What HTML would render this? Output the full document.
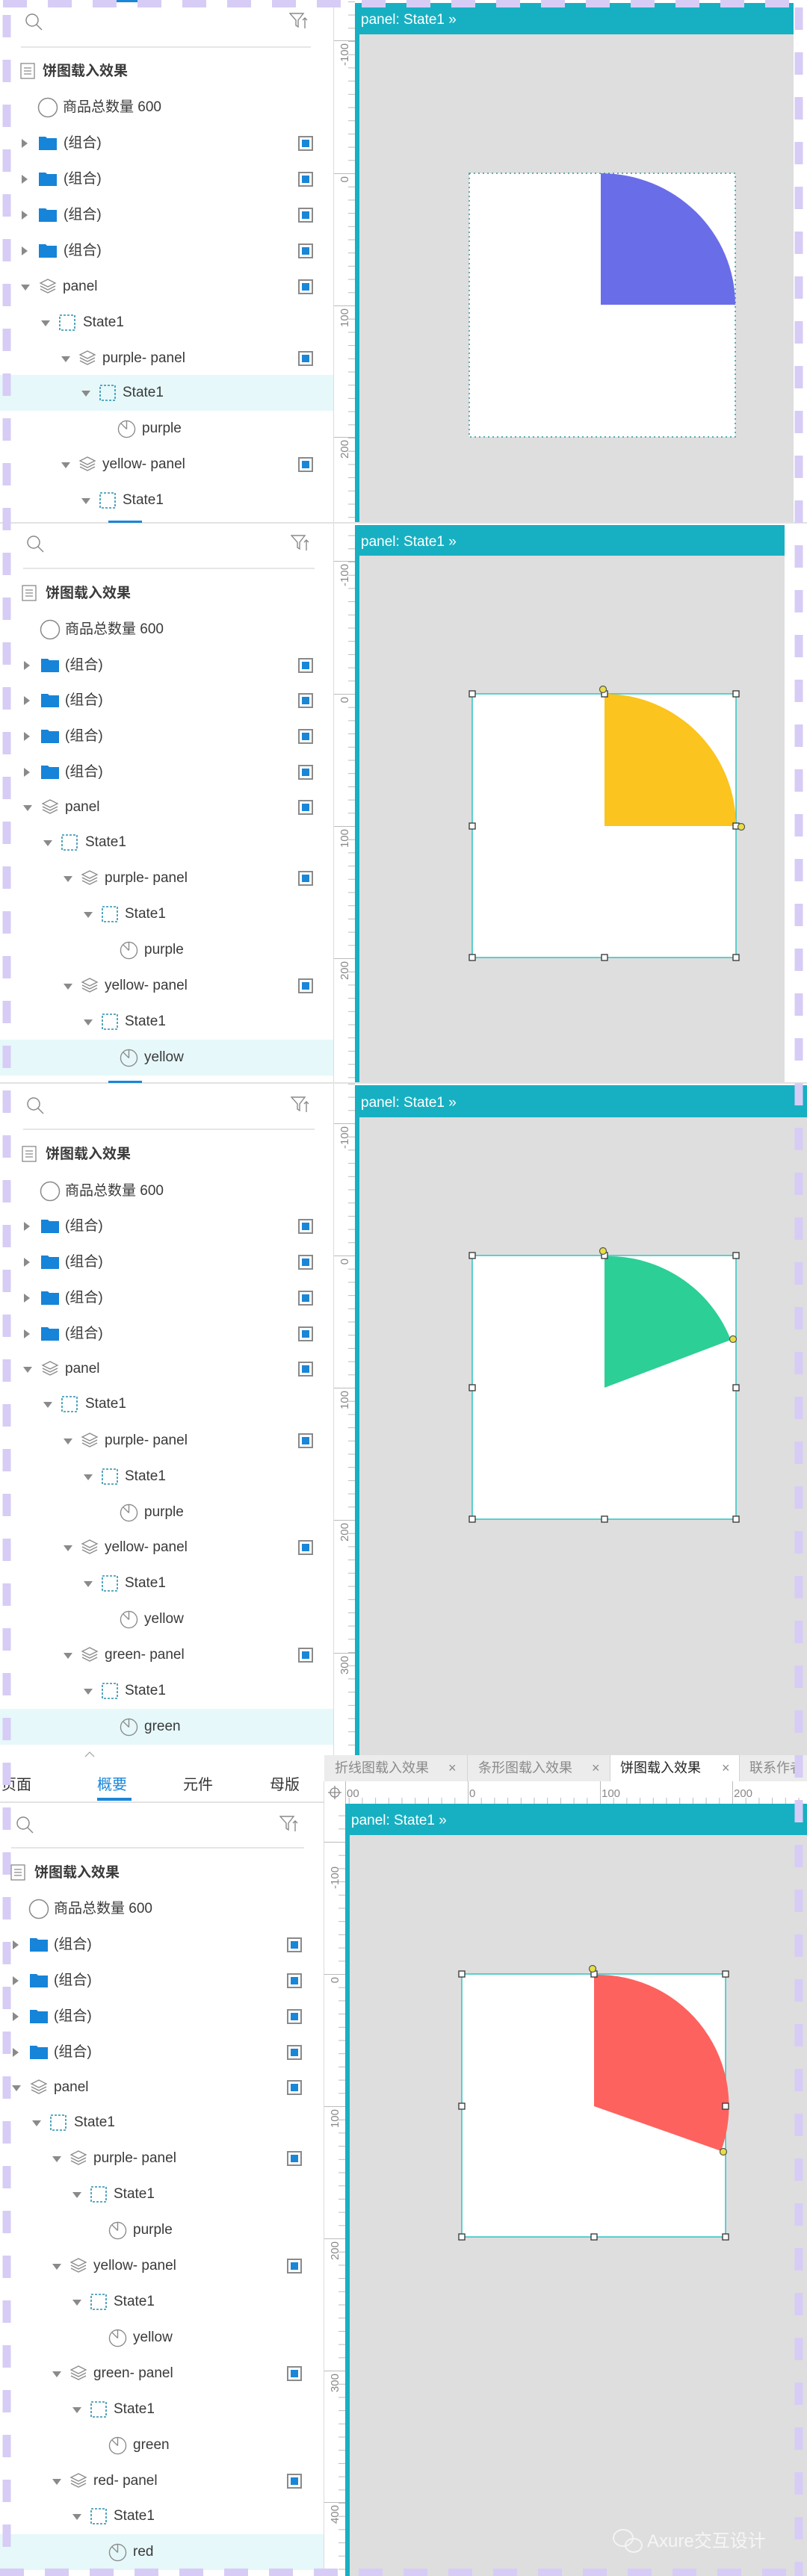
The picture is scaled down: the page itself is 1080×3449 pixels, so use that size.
<!DOCTYPE html>
<html><head><meta charset="utf-8">
<style>
*{margin:0;padding:0;box-sizing:border-box}
body{width:1080px;height:3449px;position:relative;overflow:hidden;background:#fff;font-family:"Liberation Sans","Noto Sans CJK SC",sans-serif;color:#3a3a3a}
#bg{position:absolute;left:0;top:0;z-index:0}
#ov{position:absolute;left:0;top:0;z-index:5;pointer-events:none}
.sec{position:absolute;left:0;overflow:hidden;z-index:2}
.r{position:absolute;left:0;width:460px;height:48px}
.r>*{position:absolute}
.hl{background:#e6f8fa}
.t{top:0;line-height:48px;font-size:19px;white-space:nowrap}
.ad{top:21px;width:0;height:0;border-left:6px solid transparent;border-right:6px solid transparent;border-top:8px solid #8a8a8a}
.ar{top:18px;width:0;height:0;border-top:6px solid transparent;border-bottom:6px solid transparent;border-left:8px solid #8a8a8a}
.i{top:12px}
.c{left:399px;top:14px;width:20px;height:20px;border:2px solid #8a8a8a;background:#fff}
.c::after{content:"";position:absolute;left:3px;top:3px;width:10px;height:10px;background:#1a86d8}
.srch{position:absolute}
.dv{position:absolute;height:2px;background:#e6e6e6}
.tb{position:absolute;font-size:18px;line-height:36px;color:#8a8a8a;white-space:nowrap}
</style></head><body>
<svg width="0" height="0" style="position:absolute">
<defs>
<symbol id="fo" viewBox="0 0 24 20"><path d="M0 1h9l2 2h13v16H0z" fill="#1684d8"/></symbol>
<symbol id="ly" viewBox="0 0 24 24" fill="none" stroke="#8a8a8a" stroke-width="1.3"><path d="M12 2L22 7 12 12 2 7z"/><path d="M2 11l10 5 10-5"/><path d="M2 15l10 5 10-5"/></symbol>
<symbol id="st" viewBox="0 0 24 24"><rect x="2" y="2" width="20" height="20" fill="none" stroke="#2a8fae" stroke-width="1.6" stroke-dasharray="3 2"/></symbol>
<symbol id="pi" viewBox="0 0 26 26" fill="none" stroke="#8a8a8a" stroke-width="1.4"><circle cx="13" cy="13" r="11.5"/><path d="M13 13V1.5M13 13L5 5"/></symbol>
<symbol id="ci" viewBox="0 0 28 28"><circle cx="14" cy="14" r="12.5" fill="none" stroke="#8a8a8a" stroke-width="1.5"/></symbol>
<symbol id="dc" viewBox="0 0 20 22" fill="none" stroke="#8a8a8a" stroke-width="1.3"><rect x="1" y="1" width="18" height="20"/><path d="M5 7h10M5 11h10M5 15h10"/></symbol>
<symbol id="sr" viewBox="0 0 26 26" fill="none" stroke="#8a8a8a" stroke-width="1.5"><circle cx="11" cy="11" r="8"/><path d="M17 17l7 7"/></symbol>
<symbol id="fl" viewBox="0 0 26 24" fill="none" stroke="#8a8a8a" stroke-width="1.4"><path d="M1 2h18l-7 9v9l-3-2v-7z"/><path d="M21 8v14M18 11l3-3 3 3"/></symbol>
<pattern id="p1" x="447" y="232" width="28" height="17.7" patternUnits="userSpaceOnUse"><path d="M19 0.5h9" stroke="#bbb"/></pattern>
<pattern id="p2" x="447" y="929" width="28" height="17.7" patternUnits="userSpaceOnUse"><path d="M19 0.5h9" stroke="#bbb"/></pattern>
<pattern id="p3" x="447" y="1681" width="28" height="17.7" patternUnits="userSpaceOnUse"><path d="M19 0.5h9" stroke="#bbb"/></pattern>
<pattern id="p4" x="434" y="2643" width="28" height="17.7" patternUnits="userSpaceOnUse"><path d="M19 0.5h9" stroke="#bbb"/></pattern>
<pattern id="ph" x="449" y="2385" width="17.7" height="30" patternUnits="userSpaceOnUse"><path d="M0.5 22v8" stroke="#bbb"/></pattern>
</defs></svg>

<svg id="bg" width="1080" height="3449" viewBox="0 0 1080 3449" font-family="Liberation Sans, sans-serif">
<!-- sidebar borders -->
<rect x="446" y="0" width="1" height="2350" fill="#dcdcdc"/>
<rect x="433" y="2385" width="1" height="1064" fill="#dcdcdc"/>
<!-- Section 1 -->
<rect x="447" y="0" width="28" height="700" fill="url(#p1)"/>
<g stroke="#bbb"><path d="M447 54.5h28M447 232.5h28M447 409.5h28M447 585.5h28"/></g>
<g fill="#888" font-size="15">
<text transform="translate(466 58) rotate(-90)" text-anchor="end">-100</text>
<text transform="translate(466 236) rotate(-90)" text-anchor="end">0</text>
<text transform="translate(466 413) rotate(-90)" text-anchor="end">100</text>
<text transform="translate(466 589) rotate(-90)" text-anchor="end">200</text>
</g>
<rect x="475" y="4" width="587" height="42" fill="#17b0c2"/>
<rect x="475" y="4" width="6" height="696" fill="#17b0c2"/>
<rect x="481" y="46" width="581" height="654" fill="#dedede"/>
<text x="483" y="32" fill="#fff" font-size="19">panel: State1  »</text>
<rect x="628" y="232" width="356" height="353" fill="#fff" stroke="#2a9a9a" stroke-width="1.5" stroke-dasharray="2 4"/>
<path d="M804 408V232A180 176 0 0 1 984 408Z" fill="#6a6de8"/>
<rect x="0" y="699" width="1080" height="2" fill="#e2e2e2"/>
<rect x="145" y="0" width="45" height="3" fill="#1a86d8"/>
<rect x="145" y="697" width="45" height="3" fill="#1a86d8"/>

<!-- Section 2 -->
<rect x="447" y="701" width="28" height="749" fill="url(#p2)"/>
<g stroke="#bbb"><path d="M447 751.5h28M447 929.5h28M447 1106.5h28M447 1283.5h28"/></g>
<g fill="#888" font-size="15">
<text transform="translate(466 755) rotate(-90)" text-anchor="end">-100</text>
<text transform="translate(466 933) rotate(-90)" text-anchor="end">0</text>
<text transform="translate(466 1110) rotate(-90)" text-anchor="end">100</text>
<text transform="translate(466 1287) rotate(-90)" text-anchor="end">200</text>
</g>
<rect x="475" y="703" width="575" height="41" fill="#17b0c2"/>
<rect x="475" y="703" width="6" height="747" fill="#17b0c2"/>
<rect x="481" y="744" width="569" height="706" fill="#dedede"/>
<text x="483" y="731" fill="#fff" font-size="19">panel: State1  »</text>
<rect x="632" y="929" width="353" height="353" fill="#fff" stroke="#2ec4c4" stroke-width="1.5"/>
<path d="M809 1106V929A176 177 0 0 1 985 1106Z" fill="#fbc41e"/>
<g fill="#fff" stroke="#333" stroke-width="1.3">
<rect x="628" y="925" width="8" height="8"/><rect x="805" y="925" width="8" height="8"/><rect x="981" y="925" width="8" height="8"/>
<rect x="628" y="1102" width="8" height="8"/><rect x="981" y="1102" width="8" height="8"/>
<rect x="628" y="1278" width="8" height="8"/><rect x="805" y="1278" width="8" height="8"/><rect x="981" y="1278" width="8" height="8"/>
</g>
<g fill="#e7df44" stroke="#555" stroke-width="1.2"><circle cx="807" cy="923" r="4.5"/><circle cx="992" cy="1107" r="4.5"/></g>
<rect x="0" y="1449" width="1080" height="2" fill="#e2e2e2"/>
<rect x="145" y="1447" width="45" height="3" fill="#1a86d8"/>

<!-- Section 3 -->
<rect x="447" y="1451" width="28" height="899" fill="url(#p3)"/>
<g stroke="#bbb"><path d="M447 1504.5h28M447 1681.5h28M447 1858.5h28M447 2035.5h28M447 2213.5h28"/></g>
<g fill="#888" font-size="15">
<text transform="translate(466 1508) rotate(-90)" text-anchor="end">-100</text>
<text transform="translate(466 1685) rotate(-90)" text-anchor="end">0</text>
<text transform="translate(466 1862) rotate(-90)" text-anchor="end">100</text>
<text transform="translate(466 2039) rotate(-90)" text-anchor="end">200</text>
<text transform="translate(466 2217) rotate(-90)" text-anchor="end">300</text>
</g>
<rect x="475" y="1453" width="605" height="43" fill="#17b0c2"/>
<rect x="475" y="1453" width="6" height="897" fill="#17b0c2"/>
<rect x="481" y="1496" width="599" height="854" fill="#dedede"/>
<text x="483" y="1482" fill="#fff" font-size="19">panel: State1  »</text>
<rect x="632" y="1681" width="353" height="353" fill="#fff" stroke="#2ec4c4" stroke-width="1.5"/>
<path d="M809 1858V1682A176 176 0 0 1 978 1794Z" fill="#2ccf95"/>
<g fill="#fff" stroke="#333" stroke-width="1.3">
<rect x="628" y="1677" width="8" height="8"/><rect x="805" y="1677" width="8" height="8"/><rect x="981" y="1677" width="8" height="8"/>
<rect x="628" y="1854" width="8" height="8"/><rect x="981" y="1854" width="8" height="8"/>
<rect x="628" y="2030" width="8" height="8"/><rect x="805" y="2030" width="8" height="8"/><rect x="981" y="2030" width="8" height="8"/>
</g>
<g fill="#e7df44" stroke="#555" stroke-width="1.2"><circle cx="807" cy="1675" r="4.5"/><circle cx="981" cy="1793" r="4.5"/></g>

<!-- Section 4 tabs + rulers -->
<rect x="434" y="2350" width="646" height="35" fill="#ececec"/>
<rect x="817" y="2350" width="172" height="35" fill="#fff"/>
<path d="M625.5 2350v35M816.5 2350v35M989.5 2350v35" stroke="#d4d4d4"/>
<rect x="434" y="2385" width="646" height="30" fill="#fff"/>
<rect x="462" y="2385" width="618" height="30" fill="url(#ph)"/>
<g stroke="#bbb"><path d="M626.5 2385v30M803.5 2385v30M980.5 2385v30M462.5 2385v30"/></g>
<g fill="#888" font-size="15"><text x="464" y="2406">00</text><text x="628" y="2406">0</text><text x="805" y="2406">100</text><text x="982" y="2406">200</text></g>
<g fill="none" stroke="#888" stroke-width="1.3"><circle cx="448" cy="2400" r="6"/><path d="M448 2391v18M439 2400h18"/></g>
<rect x="434" y="2415" width="28" height="1034" fill="url(#p4)"/>
<g stroke="#bbb"><path d="M434 2466.5h28M434 2643.5h28M434 2820.5h28M434 2997.5h28M434 3174.5h28M434 3350.5h28"/></g>
<g fill="#888" font-size="15">
<text transform="translate(453 2499) rotate(-90)" text-anchor="end">-100</text>
<text transform="translate(453 2647) rotate(-90)" text-anchor="end">0</text>
<text transform="translate(453 2824) rotate(-90)" text-anchor="end">100</text>
<text transform="translate(453 3001) rotate(-90)" text-anchor="end">200</text>
<text transform="translate(453 3178) rotate(-90)" text-anchor="end">300</text>
<text transform="translate(453 3354) rotate(-90)" text-anchor="end">400</text>
</g>
<rect x="462" y="2415" width="618" height="42" fill="#17b0c2"/>
<rect x="462" y="2415" width="6" height="1034" fill="#17b0c2"/>
<rect x="468" y="2457" width="612" height="992" fill="#dedede"/>
<text x="470" y="2443" fill="#fff" font-size="19">panel: State1  »</text>
<rect x="618" y="2643" width="353" height="352" fill="#fff" stroke="#2ec4c4" stroke-width="1.5"/>
<path d="M795 2820V2644A176 176 0 0 1 965 2880Z" fill="#fd625e"/>
<g fill="#fff" stroke="#333" stroke-width="1.3">
<rect x="614" y="2639" width="8" height="8"/><rect x="791" y="2639" width="8" height="8"/><rect x="967" y="2639" width="8" height="8"/>
<rect x="614" y="2816" width="8" height="8"/><rect x="967" y="2816" width="8" height="8"/>
<rect x="614" y="2991" width="8" height="8"/><rect x="791" y="2991" width="8" height="8"/><rect x="967" y="2991" width="8" height="8"/>
</g>
<g fill="#e7df44" stroke="#555" stroke-width="1.2"><circle cx="793" cy="2636" r="4.5"/><circle cx="968" cy="2881" r="4.5"/></g>
<!-- watermark -->
<g fill="none" stroke="#f4f4f4" stroke-width="2"><ellipse cx="834" cy="3398" rx="13" ry="11"/><ellipse cx="848" cy="3408" rx="11" ry="9"/></g>
<text x="866" y="3410" fill="#f6f6f6" font-size="24">Axure交互设计</text>
<!-- bottom tabs area left -->
<rect x="0" y="2412" width="433" height="2" fill="#e2e2e2"/>
<rect x="130" y="2407" width="46" height="4" fill="#1a86d8"/>
<path d="M114 2352l6-6 6 6" fill="none" stroke="#aaa" stroke-width="1.3"/>
</svg>

<!-- tab labels -->
<div class="tb" style="left:448px;top:2349px">折线图载入效果</div><div class="tb" style="left:600px;top:2349px">×</div>
<div class="tb" style="left:640px;top:2349px">条形图载入效果</div><div class="tb" style="left:792px;top:2349px">×</div>
<div class="tb" style="left:830px;top:2349px;color:#222">饼图载入效果</div><div class="tb" style="left:966px;top:2349px">×</div>
<div class="tb" style="left:1003px;top:2349px">联系作者</div>
<div class="tb" style="left:2px;top:2372px;font-size:20px;color:#333;z-index:3">页面</div>
<div class="tb" style="left:130px;top:2372px;font-size:20px;color:#1a86d8;z-index:3">概要</div>
<div class="tb" style="left:245px;top:2372px;font-size:20px;color:#333;z-index:3">元件</div>
<div class="tb" style="left:361px;top:2372px;font-size:20px;color:#333;z-index:3">母版</div>

<!-- SECTION 1 -->
<div class="sec" style="top:0;height:699px;width:446px">
<svg class="srch" style="left:32px;top:16px" width="26" height="26"><use href="#sr"/></svg>
<svg class="srch" style="left:387px;top:16px" width="26" height="24"><use href="#fl"/></svg>
<div class="dv" style="left:28px;top:62px;width:388px"></div>
<div class="r" style="top:72px"><svg class="i" style="left:27px" width="20" height="22"><use href="#dc"/></svg><span class="t" style="left:57px;font-weight:bold">饼图载入效果</span></div>
<div class="r" style="top:120px"><svg class="i" style="left:50px;top:10px" width="28" height="28"><use href="#ci"/></svg><span class="t" style="left:84px">商品总数量 600</span></div>
<div class="r" style="top:168px"><i class="ar" style="left:29px"></i><svg class="i" style="left:52px;top:14px" width="24" height="20"><use href="#fo"/></svg><span class="t" style="left:85px">(组合)</span><b class="c"></b></div>
<div class="r" style="top:216px"><i class="ar" style="left:29px"></i><svg class="i" style="left:52px;top:14px" width="24" height="20"><use href="#fo"/></svg><span class="t" style="left:85px">(组合)</span><b class="c"></b></div>
<div class="r" style="top:264px"><i class="ar" style="left:29px"></i><svg class="i" style="left:52px;top:14px" width="24" height="20"><use href="#fo"/></svg><span class="t" style="left:85px">(组合)</span><b class="c"></b></div>
<div class="r" style="top:312px"><i class="ar" style="left:29px"></i><svg class="i" style="left:52px;top:14px" width="24" height="20"><use href="#fo"/></svg><span class="t" style="left:85px">(组合)</span><b class="c"></b></div>
<div class="r" style="top:360px"><i class="ad" style="left:28px"></i><svg class="i" style="left:52px" width="24" height="24"><use href="#ly"/></svg><span class="t" style="left:84px">panel</span><b class="c"></b></div>
<div class="r" style="top:408px"><i class="ad" style="left:55px"></i><svg class="i" style="left:78px" width="24" height="24"><use href="#st"/></svg><span class="t" style="left:111px">State1</span></div>
<div class="r" style="top:456px"><i class="ad" style="left:82px"></i><svg class="i" style="left:105px" width="24" height="24"><use href="#ly"/></svg><span class="t" style="left:137px">purple- panel</span><b class="c"></b></div>
<div class="r hl" style="top:502px"><i class="ad" style="left:109px"></i><svg class="i" style="left:132px" width="24" height="24"><use href="#st"/></svg><span class="t" style="left:164px">State1</span></div>
<div class="r" style="top:550px"><svg class="i" style="left:157px" width="25" height="25"><use href="#pi"/></svg><span class="t" style="left:190px">purple</span></div>
<div class="r" style="top:598px"><i class="ad" style="left:82px"></i><svg class="i" style="left:105px" width="24" height="24"><use href="#ly"/></svg><span class="t" style="left:137px">yellow- panel</span><b class="c"></b></div>
<div class="r" style="top:646px"><i class="ad" style="left:109px"></i><svg class="i" style="left:132px" width="24" height="24"><use href="#st"/></svg><span class="t" style="left:164px">State1</span></div>
</div>

<!-- SECTION 2 -->
<div class="sec" style="top:701px;height:748px;width:446px">
<svg class="srch" style="left:34px;top:14px" width="26" height="26"><use href="#sr"/></svg>
<svg class="srch" style="left:389px;top:14px" width="26" height="24"><use href="#fl"/></svg>
<div class="dv" style="left:31px;top:59px;width:390px"></div>
<div class="r" style="top:70px"><svg class="i" style="left:29px" width="20" height="22"><use href="#dc"/></svg><span class="t" style="left:61px;font-weight:bold">饼图载入效果</span></div>
<div class="r" style="top:118px"><svg class="i" style="left:53px;top:10px" width="28" height="28"><use href="#ci"/></svg><span class="t" style="left:87px">商品总数量 600</span></div>
<div class="r" style="top:166px"><i class="ar" style="left:32px"></i><svg class="i" style="left:55px;top:14px" width="24" height="20"><use href="#fo"/></svg><span class="t" style="left:87px">(组合)</span><b class="c"></b></div>
<div class="r" style="top:213px"><i class="ar" style="left:32px"></i><svg class="i" style="left:55px;top:14px" width="24" height="20"><use href="#fo"/></svg><span class="t" style="left:87px">(组合)</span><b class="c"></b></div>
<div class="r" style="top:261px"><i class="ar" style="left:32px"></i><svg class="i" style="left:55px;top:14px" width="24" height="20"><use href="#fo"/></svg><span class="t" style="left:87px">(组合)</span><b class="c"></b></div>
<div class="r" style="top:309px"><i class="ar" style="left:32px"></i><svg class="i" style="left:55px;top:14px" width="24" height="20"><use href="#fo"/></svg><span class="t" style="left:87px">(组合)</span><b class="c"></b></div>
<div class="r" style="top:356px"><i class="ad" style="left:31px"></i><svg class="i" style="left:55px" width="24" height="24"><use href="#ly"/></svg><span class="t" style="left:87px">panel</span><b class="c"></b></div>
<div class="r" style="top:403px"><i class="ad" style="left:58px"></i><svg class="i" style="left:81px" width="24" height="24"><use href="#st"/></svg><span class="t" style="left:114px">State1</span></div>
<div class="r" style="top:451px"><i class="ad" style="left:85px"></i><svg class="i" style="left:108px" width="24" height="24"><use href="#ly"/></svg><span class="t" style="left:140px">purple- panel</span><b class="c"></b></div>
<div class="r" style="top:499px"><i class="ad" style="left:112px"></i><svg class="i" style="left:135px" width="24" height="24"><use href="#st"/></svg><span class="t" style="left:167px">State1</span></div>
<div class="r" style="top:547px"><svg class="i" style="left:160px" width="25" height="25"><use href="#pi"/></svg><span class="t" style="left:193px">purple</span></div>
<div class="r" style="top:595px"><i class="ad" style="left:85px"></i><svg class="i" style="left:108px" width="24" height="24"><use href="#ly"/></svg><span class="t" style="left:140px">yellow- panel</span><b class="c"></b></div>
<div class="r" style="top:643px"><i class="ad" style="left:112px"></i><svg class="i" style="left:135px" width="24" height="24"><use href="#st"/></svg><span class="t" style="left:167px">State1</span></div>
<div class="r hl" style="top:691px"><svg class="i" style="left:160px" width="25" height="25"><use href="#pi"/></svg><span class="t" style="left:193px">yellow</span></div>
</div>

<!-- SECTION 3 -->
<div class="sec" style="top:1451px;height:885px;width:446px">
<svg class="srch" style="left:34px;top:16px" width="26" height="26"><use href="#sr"/></svg>
<svg class="srch" style="left:389px;top:16px" width="26" height="24"><use href="#fl"/></svg>
<div class="dv" style="left:31px;top:60px;width:390px"></div>
<div class="r" style="top:71px"><svg class="i" style="left:29px" width="20" height="22"><use href="#dc"/></svg><span class="t" style="left:61px;font-weight:bold">饼图载入效果</span></div>
<div class="r" style="top:120px"><svg class="i" style="left:53px;top:10px" width="28" height="28"><use href="#ci"/></svg><span class="t" style="left:87px">商品总数量 600</span></div>
<div class="r" style="top:167px"><i class="ar" style="left:32px"></i><svg class="i" style="left:55px;top:14px" width="24" height="20"><use href="#fo"/></svg><span class="t" style="left:87px">(组合)</span><b class="c"></b></div>
<div class="r" style="top:215px"><i class="ar" style="left:32px"></i><svg class="i" style="left:55px;top:14px" width="24" height="20"><use href="#fo"/></svg><span class="t" style="left:87px">(组合)</span><b class="c"></b></div>
<div class="r" style="top:263px"><i class="ar" style="left:32px"></i><svg class="i" style="left:55px;top:14px" width="24" height="20"><use href="#fo"/></svg><span class="t" style="left:87px">(组合)</span><b class="c"></b></div>
<div class="r" style="top:311px"><i class="ar" style="left:32px"></i><svg class="i" style="left:55px;top:14px" width="24" height="20"><use href="#fo"/></svg><span class="t" style="left:87px">(组合)</span><b class="c"></b></div>
<div class="r" style="top:358px"><i class="ad" style="left:31px"></i><svg class="i" style="left:55px" width="24" height="24"><use href="#ly"/></svg><span class="t" style="left:87px">panel</span><b class="c"></b></div>
<div class="r" style="top:405px"><i class="ad" style="left:58px"></i><svg class="i" style="left:81px" width="24" height="24"><use href="#st"/></svg><span class="t" style="left:114px">State1</span></div>
<div class="r" style="top:454px"><i class="ad" style="left:85px"></i><svg class="i" style="left:108px" width="24" height="24"><use href="#ly"/></svg><span class="t" style="left:140px">purple- panel</span><b class="c"></b></div>
<div class="r" style="top:502px"><i class="ad" style="left:112px"></i><svg class="i" style="left:135px" width="24" height="24"><use href="#st"/></svg><span class="t" style="left:167px">State1</span></div>
<div class="r" style="top:550px"><svg class="i" style="left:160px" width="25" height="25"><use href="#pi"/></svg><span class="t" style="left:193px">purple</span></div>
<div class="r" style="top:597px"><i class="ad" style="left:85px"></i><svg class="i" style="left:108px" width="24" height="24"><use href="#ly"/></svg><span class="t" style="left:140px">yellow- panel</span><b class="c"></b></div>
<div class="r" style="top:645px"><i class="ad" style="left:112px"></i><svg class="i" style="left:135px" width="24" height="24"><use href="#st"/></svg><span class="t" style="left:167px">State1</span></div>
<div class="r" style="top:693px"><svg class="i" style="left:160px" width="25" height="25"><use href="#pi"/></svg><span class="t" style="left:193px">yellow</span></div>
<div class="r" style="top:741px"><i class="ad" style="left:85px"></i><svg class="i" style="left:108px" width="24" height="24"><use href="#ly"/></svg><span class="t" style="left:140px">green- panel</span><b class="c"></b></div>
<div class="r" style="top:789px"><i class="ad" style="left:112px"></i><svg class="i" style="left:135px" width="24" height="24"><use href="#st"/></svg><span class="t" style="left:167px">State1</span></div>
<div class="r hl" style="top:837px"><svg class="i" style="left:160px" width="25" height="25"><use href="#pi"/></svg><span class="t" style="left:193px">green</span></div>
</div>

<!-- SECTION 4 -->
<div class="sec" style="top:2414px;height:1035px;width:433px">
<svg class="srch" style="left:20px;top:16px" width="26" height="26"><use href="#sr"/></svg>
<svg class="srch" style="left:374px;top:16px" width="26" height="24"><use href="#fl"/></svg>
<div class="dv" style="left:15px;top:59px;width:392px"></div>
<div class="r" style="top:70px"><svg class="i" style="left:14px" width="20" height="22"><use href="#dc"/></svg><span class="t" style="left:46px;font-weight:bold">饼图载入效果</span></div>
<div class="r" style="top:118px"><svg class="i" style="left:38px;top:10px" width="28" height="28"><use href="#ci"/></svg><span class="t" style="left:72px">商品总数量 600</span></div>
<div class="r" style="top:166px"><i class="ar" style="left:17px"></i><svg class="i" style="left:40px;top:14px" width="24" height="20"><use href="#fo"/></svg><span class="t" style="left:72px">(组合)</span><b class="c" style="left:384px"></b></div>
<div class="r" style="top:214px"><i class="ar" style="left:17px"></i><svg class="i" style="left:40px;top:14px" width="24" height="20"><use href="#fo"/></svg><span class="t" style="left:72px">(组合)</span><b class="c" style="left:384px"></b></div>
<div class="r" style="top:262px"><i class="ar" style="left:17px"></i><svg class="i" style="left:40px;top:14px" width="24" height="20"><use href="#fo"/></svg><span class="t" style="left:72px">(组合)</span><b class="c" style="left:384px"></b></div>
<div class="r" style="top:310px"><i class="ar" style="left:17px"></i><svg class="i" style="left:40px;top:14px" width="24" height="20"><use href="#fo"/></svg><span class="t" style="left:72px">(组合)</span><b class="c" style="left:384px"></b></div>
<div class="r" style="top:357px"><i class="ad" style="left:16px"></i><svg class="i" style="left:40px" width="24" height="24"><use href="#ly"/></svg><span class="t" style="left:72px">panel</span><b class="c" style="left:384px"></b></div>
<div class="r" style="top:404px"><i class="ad" style="left:43px"></i><svg class="i" style="left:66px" width="24" height="24"><use href="#st"/></svg><span class="t" style="left:99px">State1</span></div>
<div class="r" style="top:452px"><i class="ad" style="left:70px"></i><svg class="i" style="left:93px" width="24" height="24"><use href="#ly"/></svg><span class="t" style="left:125px">purple- panel</span><b class="c" style="left:384px"></b></div>
<div class="r" style="top:500px"><i class="ad" style="left:97px"></i><svg class="i" style="left:120px" width="24" height="24"><use href="#st"/></svg><span class="t" style="left:152px">State1</span></div>
<div class="r" style="top:548px"><svg class="i" style="left:145px" width="25" height="25"><use href="#pi"/></svg><span class="t" style="left:178px">purple</span></div>
<div class="r" style="top:596px"><i class="ad" style="left:70px"></i><svg class="i" style="left:93px" width="24" height="24"><use href="#ly"/></svg><span class="t" style="left:125px">yellow- panel</span><b class="c" style="left:384px"></b></div>
<div class="r" style="top:644px"><i class="ad" style="left:97px"></i><svg class="i" style="left:120px" width="24" height="24"><use href="#st"/></svg><span class="t" style="left:152px">State1</span></div>
<div class="r" style="top:692px"><svg class="i" style="left:145px" width="25" height="25"><use href="#pi"/></svg><span class="t" style="left:178px">yellow</span></div>
<div class="r" style="top:740px"><i class="ad" style="left:70px"></i><svg class="i" style="left:93px" width="24" height="24"><use href="#ly"/></svg><span class="t" style="left:125px">green- panel</span><b class="c" style="left:384px"></b></div>
<div class="r" style="top:788px"><i class="ad" style="left:97px"></i><svg class="i" style="left:120px" width="24" height="24"><use href="#st"/></svg><span class="t" style="left:152px">State1</span></div>
<div class="r" style="top:836px"><svg class="i" style="left:145px" width="25" height="25"><use href="#pi"/></svg><span class="t" style="left:178px">green</span></div>
<div class="r" style="top:884px"><i class="ad" style="left:70px"></i><svg class="i" style="left:93px" width="24" height="24"><use href="#ly"/></svg><span class="t" style="left:125px">red- panel</span><b class="c" style="left:384px"></b></div>
<div class="r" style="top:931px"><i class="ad" style="left:97px"></i><svg class="i" style="left:120px" width="24" height="24"><use href="#st"/></svg><span class="t" style="left:152px">State1</span></div>
<div class="r hl" style="top:979px;width:433px"><svg class="i" style="left:145px" width="25" height="25"><use href="#pi"/></svg><span class="t" style="left:178px">red</span></div>
</div>

<svg id="ov" width="1080" height="3449">
<g stroke="#d7ccf6" fill="none">
<line x1="9" y1="0" x2="9" y2="3449" stroke-width="11" stroke-dasharray="30 30" stroke-dashoffset="-20"/>
<line x1="1069" y1="0" x2="1069" y2="3449" stroke-width="11" stroke-dasharray="30 30" stroke-dashoffset="-10"/>
<line x1="0" y1="5" x2="1080" y2="5" stroke-width="10" stroke-dasharray="32 28" stroke-dashoffset="-4"/>
<line x1="0" y1="3444" x2="1080" y2="3444" stroke-width="10" stroke-dasharray="32 28"/>
</g>
</svg>
</body></html>
